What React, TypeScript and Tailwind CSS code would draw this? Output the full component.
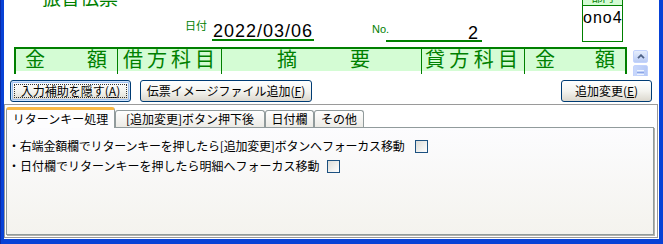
import React from "react";

const green = "text-[#008000]";

function HeaderCell({
  chars,
  w,
  pad,
  last,
}: {
  chars: string[];
  w: string;
  pad: string;
  last?: boolean;
}) {
  return (
    <div className={`${w} shrink-0 flex flex-col ${last ? "" : "border-r border-[#008000]"}`}>
      <div className={`h-[22px] bg-[#d4fcd4] flex justify-between items-start ${pad} text-[20px] leading-[20px] ${green}`}>
        {chars.map((c, i) => (
          <span key={i}>{c}</span>
        ))}
      </div>
      <div className="flex-1 bg-white" />
    </div>
  );
}

function XPButton({
  label,
  mn,
  w,
  className,
  focused,
}: {
  label: string;
  mn: string;
  w: string;
  className?: string;
  focused?: boolean;
}) {
  return (
    <div
      className={`${w} ${className ?? ""} relative h-[22px] shrink-0 rounded-[3px] border border-[#003c74] bg-linear-to-b from-[#ffffff] via-[#f4f4f0] to-[#dcd8ce] flex items-center justify-center text-[12px] leading-[14px] whitespace-nowrap ${
        focused ? "shadow-[inset_0_0_0_1px_#cfe4fd,inset_0_0_0_2px_#9fbfee]" : ""
      }`}
    >
      <span>
        {label}(<span className="underline">{mn}</span>)
      </span>
      {focused && <span className="absolute inset-[3px] border border-dotted border-[#333]" />}
    </div>
  );
}

function Checkbox() {
  return (
    <div className="w-[13px] h-[13px] shrink-0 border border-[#1c5180] bg-linear-to-br from-[#dcdcd7] to-[#ffffff]" />
  );
}

export default function App() {
  return (
    <div className="w-[663px] h-[244px] overflow-hidden bg-[#0842d6] border-l border-[#0a2aa8] pl-[3px] pr-[4px] pb-[5px] flex flex-col font-['Noto_Sans_CJK_JP',sans-serif] text-black">
      <div className="flex-1 min-h-0 bg-white flex flex-col">
        {/* top header line */}
        <div className="h-[47px] shrink-0 flex items-start">
          <div className={`ml-[38px] -mt-[13px] text-[19px] leading-[20px] ${green} whitespace-nowrap shrink-0`}>
            振替伝票
          </div>
          <div className={`ml-[67px] mt-[19px] text-[11px] leading-[13px] ${green} whitespace-nowrap shrink-0`}>
            日付
          </div>
          <div className="ml-[5px] mt-[19px] w-[102px] h-[22px] pt-[3px] pl-[1px] border-b-2 border-[#008000] shrink-0 font-['Liberation_Sans',sans-serif] text-[18px] leading-[18px] tracking-[1px] whitespace-nowrap">
            2022/03/06
          </div>
          <div className={`ml-[58px] mt-[24px] w-[14px] text-[11px] leading-[11px] ${green} font-['Liberation_Sans',sans-serif] whitespace-nowrap shrink-0`}>
            No.
          </div>
          <div className="mt-[20px] w-[96px] h-[22px] pt-[4px] pr-[4px] border-b-2 border-[#008000] shrink-0 text-right font-['Liberation_Sans',sans-serif] text-[18px] leading-[18px]">
            2
          </div>
          <div className="ml-[100px] -mt-[14px] w-[41px] shrink-0 border border-[#008000] flex flex-col">
            <div className={`h-[19px] bg-[#d4fcd4] border-b border-[#008000] flex items-end justify-center pb-[2px] text-[11px] leading-[12px] ${green}`}>
              部門
            </div>
            <div className="h-[35px] pt-[4px] font-['Liberation_Sans',sans-serif] text-[16px] leading-[16px] tracking-[1px] whitespace-nowrap">
              ono4
            </div>
          </div>
        </div>

        {/* table header row */}
        <div className="h-[29px] shrink-0 flex items-start overflow-hidden">
          <div className="ml-[10px] w-[613px] h-[27px] shrink-0 border-2 border-b-0 border-[#008000] flex">
            <HeaderCell chars={["金", "額"]} w="w-[102px]" pad="pl-[9px] pr-[10px]" />
            <HeaderCell chars={["借", "方", "科", "目"]} w="w-[104px]" pad="pl-[5px] pr-[6px]" />
            <HeaderCell chars={["摘", "要"]} w="w-[200px]" pad="pl-[55px] pr-[51px]" />
            <HeaderCell chars={["貸", "方", "科", "目"]} w="w-[103px]" pad="pl-[3px] pr-[6px]" />
            <HeaderCell chars={["金", "額"]} w="w-[100px]" pad="pl-[10px] pr-[10px]" last />
          </div>
          <div className="ml-[6px] mt-[3px] w-[15px] shrink-0 flex flex-col gap-[2px]">
            <div className="h-[13px] rounded-[2px] border border-[#c3d3fd] bg-linear-to-b from-[#e6eefc] to-[#b9cbf5] flex items-center justify-center">
              <svg width="8" height="5" viewBox="0 0 8 5">
                <path d="M1 4.2 L4 1.2 L7 4.2" fill="none" stroke="#4d6185" strokeWidth="1.8" />
              </svg>
            </div>
            <div className="h-[20px] rounded-[2px] border border-[#c3d3fd] bg-linear-to-r from-[#c9d8fc] to-[#b6c9f6] flex flex-col items-center pt-[4px] gap-[1px]">
              <div className="w-[7px] h-[1px] bg-[#eef4fe]" />
              <div className="w-[7px] h-[1px] bg-[#8ca6e6]" />
              <div className="w-[7px] h-[1px] bg-[#eef4fe]" />
              <div className="w-[7px] h-[1px] bg-[#8ca6e6]" />
            </div>
          </div>
        </div>

        {/* buttons */}
        <div className="mt-[4px] h-[22px] shrink-0 flex">
          <XPButton label="入力補助を隠す" mn="A" w="w-[121px]" className="ml-[6px]" focused />
          <XPButton label="伝票イメージファイル追加" mn="F" w="w-[172px]" className="ml-[9px]" />
          <XPButton label="追加変更" mn="E" w="w-[91px]" className="ml-auto mr-[7px]" />
        </div>

        {/* frame with tabs */}
        <div className="mt-[2px] mr-[1px] mb-[1px] flex-1 min-h-0 border border-[#9a9a9a] p-[1px] bg-white flex flex-col">
          <div className="h-[21px] shrink-0 flex items-end">
            <div className="relative z-10 w-[109px] h-[21px] -mb-[1px] shrink-0 rounded-t-[3px] border-x border-[#919b9c] border-t-[3px] border-t-[#f8b744] bg-[#fdfdfe] text-center text-[12px] leading-[17px] whitespace-nowrap">
              リターンキー処理
            </div>
            <div className="w-[150px] h-[17px] shrink-0 rounded-t-[3px] border border-b-0 border-[#919b9c] bg-linear-to-b from-[#ffffff] to-[#ecebe6] flex items-center justify-center text-[12px] leading-[14px] whitespace-nowrap">
              [追加変更]ボタン押下後
            </div>
            <div className="w-[49px] h-[17px] shrink-0 rounded-t-[3px] border border-b-0 border-[#919b9c] bg-linear-to-b from-[#ffffff] to-[#ecebe6] flex items-center justify-center text-[12px] leading-[14px] whitespace-nowrap">
              日付欄
            </div>
            <div className="w-[50px] h-[17px] shrink-0 rounded-t-[3px] border border-b-0 border-[#919b9c] bg-linear-to-b from-[#ffffff] to-[#ecebe6] flex items-center justify-center text-[12px] leading-[14px] whitespace-nowrap">
              その他
            </div>
          </div>
          <div className="flex-1 min-h-0 mr-[2px] mb-[1px] border border-[#919b9c] shadow-[1px_1px_0_#b4b2aa] bg-linear-to-b from-[#fcfcfe] to-[#f4f3ee] pt-[8px] pl-[1px] flex flex-col">
            <div className="h-[20px] flex items-center text-[12px] leading-[20px] whitespace-nowrap">
              <span className="w-[407px] shrink-0 tracking-[-0.2px]">・右端金額欄でリターンキーを押したら[追加変更]ボタンへフォーカス移動</span>
              <Checkbox />
            </div>
            <div className="h-[20px] flex items-center text-[12px] leading-[20px] whitespace-nowrap">
              <span className="w-[319px] shrink-0">・日付欄でリターンキーを押したら明細へフォーカス移動</span>
              <Checkbox />
            </div>
          </div>
        </div>
      </div>
    </div>
  );
}
